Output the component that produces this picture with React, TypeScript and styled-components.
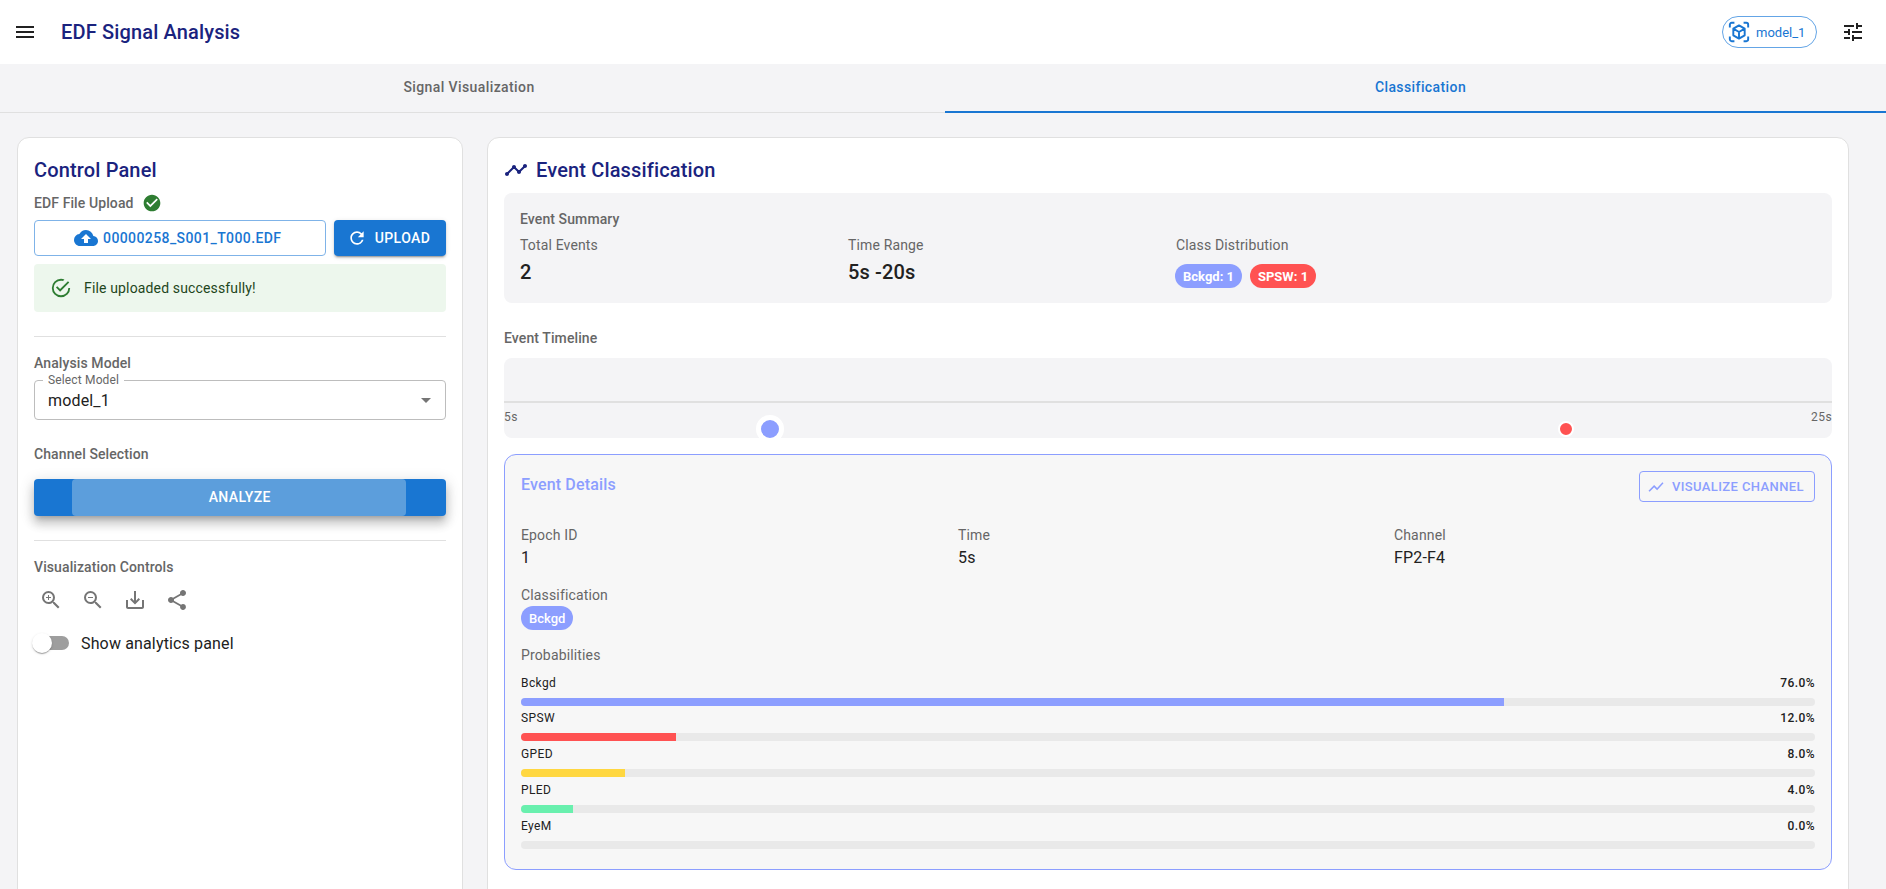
import styled, { createGlobalStyle } from "styled-components";
import {
  MdMenu,
  MdTune,
  MdShowChart,
  MdTimeline,
  MdCloudUpload,
  MdRefresh,
  MdCheckCircle,
  MdZoomIn,
  MdZoomOut,
  MdSaveAlt,
  MdShare,
  MdArrowDropDown,
} from "react-icons/md";

const GlobalStyle = createGlobalStyle`
  html, body {
    margin: 0;
    height: 100%;
    overflow: hidden;
    background: #f4f4f6;
    font-family: Roboto, "Liberation Sans", sans-serif;
  }
  #root {
    height: 100%;
  }
  * {
    box-sizing: border-box;
  }
`;

const Page = styled.div`
  display: flex;
  flex-direction: column;
  height: 100%;
  overflow: hidden;
`;

const Header = styled.header`
  display: flex;
  align-items: center;
  flex: 0 0 64px;
  padding: 0 21px 0 13px;
  background: #fff;
`;

const IconBtn = styled.span<{ $color?: string; $size?: number }>`
  display: inline-flex;
  align-items: center;
  justify-content: center;
  color: ${(p) => p.$color || "#212121"};
  font-size: ${(p) => p.$size || 24}px;
`;

const AppTitle = styled.h1`
  margin: 0 0 0 24px;
  flex: 1;
  font-size: 20px;
  line-height: 32px;
  font-weight: 500;
  letter-spacing: 0.15px;
  color: #1a237e;
`;

const ModelChip = styled.div`
  display: flex;
  align-items: center;
  gap: 6px;
  height: 32px;
  width: 95px;
  padding-left: 5px;
  margin-right: 24px;
  border: 1px solid #64a5e6;
  border-radius: 16px;
  color: #1976d2;
  font-size: 13px;
`;

const Tabs = styled.nav`
  display: flex;
  flex: 0 0 49px;
  border-bottom: 1px solid #e0e0e0;
  background: #f4f4f6;
`;

const Tab = styled.div<{ $active?: boolean }>`
  display: flex;
  align-items: center;
  justify-content: center;
  margin-bottom: -1px;
  font-size: 14px;
  font-weight: 500;
  letter-spacing: 0.4px;
  color: ${(p) => (p.$active ? "#1976d2" : "#666")};
  border-bottom: 2px solid ${(p) => (p.$active ? "#1976d2" : "transparent")};
  ${(p) => (p.$active ? "flex: 1; padding: 0 0 2px 10px;" : "flex: 0 0 945px; padding: 0 7px 2px 0;")}
`;

const Main = styled.main`
  display: flex;
  gap: 24.5px;
  padding: 24px 37px 0 17px;
`;

const Panel = styled.section<{ $width?: number }>`
  flex: ${(p) => (p.$width ? `0 0 ${p.$width}px` : 1)};
  min-width: 0;
  min-height: 800px;
  padding: 16px;
  background: #fff;
  border: 1px solid #e0e0e0;
  border-radius: 12px;
`;

const PanelTitle = styled.h2`
  display: flex;
  align-items: center;
  gap: 8px;
  margin: 0;
  font-size: 20px;
  line-height: 32px;
  font-weight: 500;
  letter-spacing: 0.15px;
  color: #1a237e;
`;

const Label = styled.div<{ $mt?: number }>`
  display: flex;
  align-items: center;
  gap: 8px;
  margin-top: ${(p) => p.$mt || 0}px;
  font-size: 14px;
  line-height: 20px;
  font-weight: 500;
  letter-spacing: 0.1px;
  color: #666;
`;

const UploadRow = styled.div`
  display: flex;
  gap: 8px;
  margin-top: 7px;
`;

const FileButton = styled.div`
  flex: 1;
  display: flex;
  align-items: center;
  justify-content: center;
  gap: 5px;
  height: 36px;
  padding-right: 4px;
  border: 1px solid #7fb3e8;
  border-radius: 4px;
  color: #1976d2;
  font-size: 14px;
  font-weight: 500;
  letter-spacing: 0.4px;
`;

const UploadButton = styled.div`
  flex: 0 0 112px;
  display: flex;
  align-items: center;
  justify-content: center;
  gap: 8px;
  height: 36px;
  padding-right: 2px;
  border-radius: 4px;
  background: #1976d2;
  color: #fff;
  font-size: 14px;
  font-weight: 500;
  letter-spacing: 0.4px;
  box-shadow: 0 3px 1px -2px rgba(0, 0, 0, 0.2), 0 2px 2px rgba(0, 0, 0, 0.14), 0 1px 5px rgba(0, 0, 0, 0.12);
`;

const Alert = styled.div`
  display: flex;
  align-items: center;
  gap: 12px;
  height: 48px;
  margin-top: 8px;
  padding: 0 16px;
  border-radius: 4px;
  background: #edf7ed;
  color: #1e4620;
  font-size: 14px;
  letter-spacing: 0.15px;
`;

const Divider = styled.hr<{ $mt?: number }>`
  margin: ${(p) => p.$mt || 24}px 0 0;
  border: 0;
  border-top: 1px solid #e0e0e0;
`;

const SelectBox = styled.div`
  position: relative;
  display: flex;
  align-items: center;
  justify-content: space-between;
  height: 40px;
  margin-top: 7px;
  padding: 0 7px 0 13px;
  border: 1px solid #bdbdbd;
  border-radius: 4px;
  color: #212121;
  font-size: 16px;
  letter-spacing: 0.15px;
`;

const Legend = styled.span`
  position: absolute;
  top: -8px;
  left: 8px;
  padding: 0 5px;
  background: #fff;
  color: #666;
  font-size: 12px;
  line-height: 14px;
`;

const AnalyzeButton = styled.div`
  display: flex;
  height: 37px;
  margin-top: 15px;
  padding: 0 40px 0 38px;
  border-radius: 4px;
  background: #1976d2;
  box-shadow: 0 5px 5px -3px rgba(0, 0, 0, 0.2), 0 8px 10px 1px rgba(0, 0, 0, 0.14), 0 3px 14px 2px rgba(0, 0, 0, 0.12);
`;

const AnalyzeBand = styled.div`
  flex: 1;
  display: flex;
  align-items: center;
  justify-content: center;
  padding: 0 0 2px 2px;
  border-radius: 4px;
  background: #5c9edc;
  color: #fff;
  font-size: 14px;
  font-weight: 500;
  letter-spacing: 0.4px;
`;

const ToolRow = styled.div`
  display: flex;
  margin: 2px 0 0 -4px;
`;

const Tool = styled.span`
  display: flex;
  align-items: center;
  justify-content: center;
  width: 42px;
  height: 42px;
  color: #757575;
  font-size: 24px;
`;

const SwitchRow = styled.div`
  display: flex;
  align-items: center;
  height: 38px;
  margin-top: 3px;
  color: #212121;
  font-size: 16px;
  letter-spacing: 0.15px;
`;

const SwitchTrack = styled.span`
  position: relative;
  display: block;
  width: 29px;
  height: 14px;
  margin: 0 12px 0 6px;
  border-radius: 7px;
  background: #9e9e9e;
`;

const SwitchThumb = styled.span`
  position: absolute;
  top: -3px;
  left: -8px;
  width: 20px;
  height: 20px;
  border-radius: 50%;
  background: #fff;
  box-shadow: 0 2px 1px -1px rgba(0, 0, 0, 0.2), 0 1px 1px rgba(0, 0, 0, 0.14), 0 1px 3px rgba(0, 0, 0, 0.12);
`;

const SummaryBox = styled.div`
  height: 110px;
  margin-top: 7px;
  padding: 16px;
  border-radius: 8px;
  background: #f4f4f6;
`;

const SummaryGrid = styled.div`
  display: grid;
  grid-template-columns: 328px 328px 1fr;
  margin-top: 6px;
`;

const Muted = styled.div`
  font-size: 14px;
  line-height: 20px;
  letter-spacing: 0.15px;
  color: #666;
`;

const BigValue = styled.div`
  margin-top: 3px;
  font-size: 20px;
  line-height: 28px;
  font-weight: 500;
  letter-spacing: 0.15px;
  color: #212121;
`;

const ChipRow = styled.div`
  display: flex;
  gap: 8px;
  margin: 9px 0 0 -1px;
`;

const Chip = styled.span<{ $bg: string; $weight?: number }>`
  display: flex;
  align-items: center;
  width: fit-content;
  height: 24px;
  padding: 0 8px;
  border-radius: 12px;
  background: ${(p) => p.$bg};
  color: #fff;
  font-size: 13px;
  font-weight: ${(p) => p.$weight || 700};
`;

const Timeline = styled.div`
  position: relative;
  height: 80px;
  margin-top: 10px;
  padding-top: 43px;
  border-radius: 8px;
  background: #f4f4f6;
  overflow: hidden;
`;

const Axis = styled.div`
  height: 2px;
  background: #e0e0e0;
`;

const AxisLabels = styled.div`
  display: flex;
  justify-content: space-between;
  margin-top: 6px;
  font-size: 12px;
  line-height: 16px;
  letter-spacing: 0.4px;
  color: #666;
`;

const Marker = styled.span<{ $bg: string; $size: number; $ring: number }>`
  position: absolute;
  top: ${(p) => 71 - p.$size / 2}px;
  width: ${(p) => p.$size}px;
  height: ${(p) => p.$size}px;
  transform: translateX(-50%);
  border-radius: 50%;
  background: ${(p) => p.$bg};
  border: ${(p) => p.$ring}px solid #fff;
`;

const DetailsBox = styled.div`
  margin-top: 16px;
  padding: 16px 16px 15.5px;
  border: 1px solid #8c9eff;
  border-radius: 12px;
  background: #f7f7f7;
`;

const DetailsHead = styled.div`
  display: flex;
  align-items: flex-start;
  justify-content: space-between;
`;

const DetailsTitle = styled.div`
  font-size: 16px;
  line-height: 28px;
  font-weight: 500;
  letter-spacing: 0.15px;
  color: #8c9eff;
`;

const VisualizeButton = styled.div`
  display: flex;
  align-items: center;
  gap: 7px;
  height: 31px;
  padding: 0 10px 0 7px;
  border: 1px solid #8c9eff;
  border-radius: 4px;
  color: #8c9eff;
  font-size: 13px;
  font-weight: 500;
  letter-spacing: 0.4px;
`;

const DetailsGrid = styled.div`
  display: grid;
  grid-template-columns: 437px 436px 1fr;
  margin-top: 23px;
`;

const DetailValue = styled.div`
  padding-top: 1px;
  font-size: 16px;
  line-height: 24px;
  letter-spacing: 0.15px;
  color: #212121;
`;

const Block = styled.div<{ $mt: number }>`
  margin-top: ${(p) => p.$mt}px;
`;

const SmallChip = styled(Chip)`
  margin-top: 1px;
`;

const ProbList = styled.div`
  margin-top: 9.7px;
`;

const ProbRow = styled.div`
  height: 35.75px;
`;

const ProbHead = styled.div`
  display: flex;
  justify-content: space-between;
  font-size: 12px;
  line-height: 16px;
  letter-spacing: 0.4px;
  color: #212121;
`;

const ProbValue = styled.span`
  font-weight: 500;
`;

const ProbTrack = styled.div`
  height: 8px;
  margin-top: 7px;
  border-radius: 4px;
  background: #e9e9e9;
  overflow: hidden;
`;

const ProbFill = styled.div<{ $bg: string }>`
  height: 100%;
  background: ${(p) => p.$bg};
`;

function SuccessOutlined() {
  return (
    <svg width="22" height="22" viewBox="0 0 24 24" fill="#2e7d32">
      <path d="M20,12A8,8 0 0,1 12,20A8,8 0 0,1 4,12A8,8 0 0,1 12,4C12.76,4 13.5,4.11 14.2,4.31L15.77,2.74C14.61,2.26 13.34,2 12,2A10,10 0 0,0 2,12A10,10 0 0,0 12,22A10,10 0 0,0 22,12M7.91,10.08L6.5,11.5L11,16L21,6L19.59,4.58L11,13.17L7.91,10.08Z" />
    </svg>
  );
}

function ViewInAr() {
  return (
    <svg width="22" height="22" viewBox="0 0 24 24" fill="none" stroke="#1976d2" strokeWidth="2.1">
      <path d="M2 7V4a2 2 0 0 1 2-2h3M17 2h3a2 2 0 0 1 2 2v3M22 17v3a2 2 0 0 1-2 2h-3M7 22H4a2 2 0 0 1-2-2v-3" />
      <path
        d="M12 4.8 18.2 8.4v7.2L12 19.2 5.8 15.6V8.4zM5.8 8.4 12 12l6.2-3.6M12 12v7.2"
        strokeLinejoin="round"
      />
    </svg>
  );
}

const probabilities = [
  { name: "Bckgd", value: 76, color: "#8c9eff" },
  { name: "SPSW", value: 12, color: "#ff5252" },
  { name: "GPED", value: 8, color: "#ffd740" },
  { name: "PLED", value: 4, color: "#69f0ae" },
  { name: "EyeM", value: 0, color: "#b388ff" },
];

export default function App() {
  return (
    <Page>
      <GlobalStyle />
      <Header>
        <IconBtn>
          <MdMenu />
        </IconBtn>
        <AppTitle>EDF Signal Analysis</AppTitle>
        <ModelChip>
          <ViewInAr />
          model_1
        </ModelChip>
        <IconBtn>
          <MdTune />
        </IconBtn>
      </Header>
      <Tabs>
        <Tab>Signal Visualization</Tab>
        <Tab $active>Classification</Tab>
      </Tabs>
      <Main>
        <Panel $width={445.5}>
          <PanelTitle>Control Panel</PanelTitle>
          <Label $mt={7}>
            EDF File Upload
            <IconBtn $color="#2e7d32" $size={20}>
              <MdCheckCircle />
            </IconBtn>
          </Label>
          <UploadRow>
            <FileButton>
              <IconBtn $color="#1976d2" $size={24}>
                <MdCloudUpload />
              </IconBtn>
              00000258_S001_T000.EDF
            </FileButton>
            <UploadButton>
              <IconBtn $color="#fff" $size={20}>
                <MdRefresh />
              </IconBtn>
              UPLOAD
            </UploadButton>
          </UploadRow>
          <Alert>
            <SuccessOutlined />
            File uploaded successfully!
          </Alert>
          <Divider />
          <Label $mt={16}>Analysis Model</Label>
          <SelectBox>
            <Legend>Select Model</Legend>
            model_1
            <IconBtn $color="#757575">
              <MdArrowDropDown />
            </IconBtn>
          </SelectBox>
          <Label $mt={24}>Channel Selection</Label>
          <AnalyzeButton>
            <AnalyzeBand>ANALYZE</AnalyzeBand>
          </AnalyzeButton>
          <Divider />
          <Label $mt={16}>Visualization Controls</Label>
          <ToolRow>
            <Tool>
              <MdZoomIn />
            </Tool>
            <Tool>
              <MdZoomOut />
            </Tool>
            <Tool>
              <MdSaveAlt />
            </Tool>
            <Tool>
              <MdShare />
            </Tool>
          </ToolRow>
          <SwitchRow>
            <SwitchTrack>
              <SwitchThumb />
            </SwitchTrack>
            Show analytics panel
          </SwitchRow>
        </Panel>
        <Panel>
          <PanelTitle>
            <IconBtn $color="#1a237e" $size={24}>
              <MdTimeline />
            </IconBtn>
            Event Classification
          </PanelTitle>
          <SummaryBox>
            <Label>Event Summary</Label>
            <SummaryGrid>
              <div>
                <Muted>Total Events</Muted>
                <BigValue>2</BigValue>
              </div>
              <div>
                <Muted>Time Range</Muted>
                <BigValue>5s -20s</BigValue>
              </div>
              <div>
                <Muted>Class Distribution</Muted>
                <ChipRow>
                  <Chip $bg="#8c9eff">Bckgd: 1</Chip>
                  <Chip $bg="#ff5252">SPSW: 1</Chip>
                </ChipRow>
              </div>
            </SummaryGrid>
          </SummaryBox>
          <Label $mt={25}>Event Timeline</Label>
          <Timeline>
            <Axis />
            <AxisLabels>
              <span>5s</span>
              <span>25s</span>
            </AxisLabels>
            <Marker $bg="#8c9eff" $size={28} $ring={5} style={{ left: 266 }} />
            <Marker $bg="#ff5252" $size={16} $ring={2} style={{ left: 1062 }} />
          </Timeline>
          <DetailsBox>
            <DetailsHead>
              <DetailsTitle>Event Details</DetailsTitle>
              <VisualizeButton>
                <IconBtn $color="#8c9eff" $size={18}>
                  <MdShowChart />
                </IconBtn>
                VISUALIZE CHANNEL
              </VisualizeButton>
            </DetailsHead>
            <DetailsGrid>
              <div>
                <Muted>Epoch ID</Muted>
                <DetailValue>1</DetailValue>
              </div>
              <div>
                <Muted>Time</Muted>
                <DetailValue>5s</DetailValue>
              </div>
              <div>
                <Muted>Channel</Muted>
                <DetailValue>FP2-F4</DetailValue>
              </div>
            </DetailsGrid>
            <Block $mt={15}>
              <Muted>Classification</Muted>
              <SmallChip $bg="#8c9eff" $weight={500}>
                Bckgd
              </SmallChip>
            </Block>
            <Block $mt={15}>
              <Muted>Probabilities</Muted>
              <ProbList>
                {probabilities.map((p) => (
                  <ProbRow key={p.name}>
                    <ProbHead>
                      <span>{p.name}</span>
                      <ProbValue>{p.value.toFixed(1)}%</ProbValue>
                    </ProbHead>
                    <ProbTrack>
                      <ProbFill $bg={p.color} style={{ width: `${p.value}%` }} />
                    </ProbTrack>
                  </ProbRow>
                ))}
              </ProbList>
            </Block>
          </DetailsBox>
        </Panel>
      </Main>
    </Page>
  );
}
